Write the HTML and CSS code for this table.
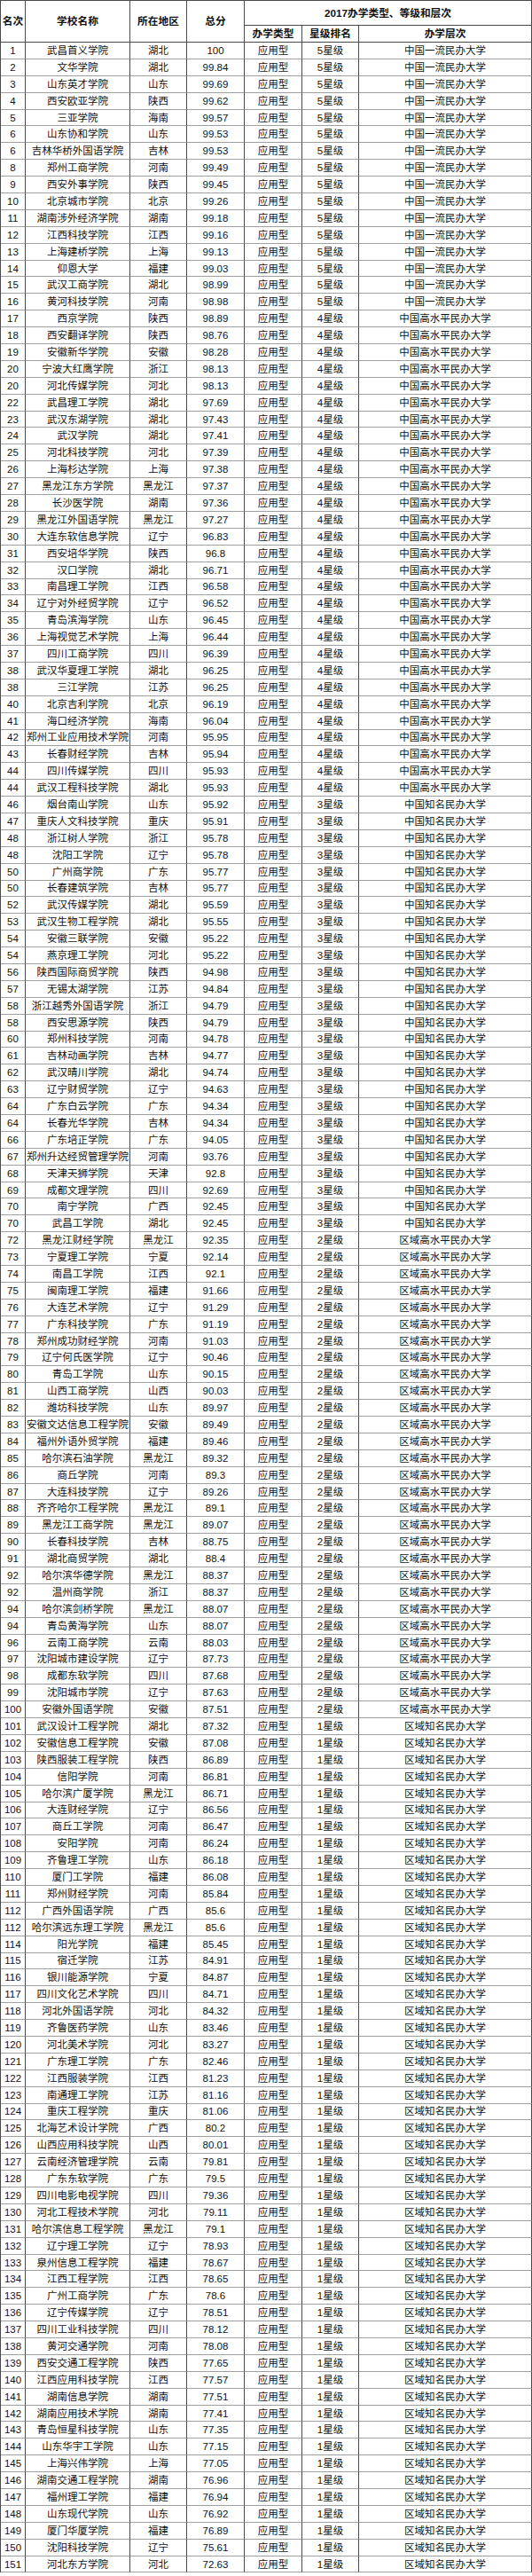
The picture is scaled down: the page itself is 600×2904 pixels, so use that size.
FILE: index.html
```html
<!DOCTYPE html>
<html lang="zh-CN">
<head>
<meta charset="utf-8">
<title>2017中国民办大学排名</title>
<link rel="stylesheet" href="styles.css">
</head>
<body>
<table class="rank">
<colgroup>
<col class="c-rank"><col class="c-name"><col class="c-area"><col class="c-score"><col class="c-type"><col class="c-star"><col class="c-level">
</colgroup>
<thead>
<tr class="h1"><th rowspan="2">名次</th><th rowspan="2">学校名称</th><th rowspan="2">所在地区</th><th rowspan="2">总分</th><th colspan="3" class="group">2017办学类型、等级和层次</th></tr>
<tr class="h2"><th>办学类型</th><th>星级排名</th><th>办学层次</th></tr>
</thead>
<tbody>
<tr><td>1</td><td>武昌首义学院</td><td>湖北</td><td>100</td><td>应用型</td><td>5星级</td><td>中国一流民办大学</td></tr>
<tr><td>2</td><td>文华学院</td><td>湖北</td><td>99.84</td><td>应用型</td><td>5星级</td><td>中国一流民办大学</td></tr>
<tr><td>3</td><td>山东英才学院</td><td>山东</td><td>99.69</td><td>应用型</td><td>5星级</td><td>中国一流民办大学</td></tr>
<tr><td>4</td><td>西安欧亚学院</td><td>陕西</td><td>99.62</td><td>应用型</td><td>5星级</td><td>中国一流民办大学</td></tr>
<tr><td>5</td><td>三亚学院</td><td>海南</td><td>99.57</td><td>应用型</td><td>5星级</td><td>中国一流民办大学</td></tr>
<tr><td>6</td><td>山东协和学院</td><td>山东</td><td>99.53</td><td>应用型</td><td>5星级</td><td>中国一流民办大学</td></tr>
<tr><td>6</td><td>吉林华桥外国语学院</td><td>吉林</td><td>99.53</td><td>应用型</td><td>5星级</td><td>中国一流民办大学</td></tr>
<tr><td>8</td><td>郑州工商学院</td><td>河南</td><td>99.49</td><td>应用型</td><td>5星级</td><td>中国一流民办大学</td></tr>
<tr><td>9</td><td>西安外事学院</td><td>陕西</td><td>99.45</td><td>应用型</td><td>5星级</td><td>中国一流民办大学</td></tr>
<tr><td>10</td><td>北京城市学院</td><td>北京</td><td>99.26</td><td>应用型</td><td>5星级</td><td>中国一流民办大学</td></tr>
<tr><td>11</td><td>湖南涉外经济学院</td><td>湖南</td><td>99.18</td><td>应用型</td><td>5星级</td><td>中国一流民办大学</td></tr>
<tr><td>12</td><td>江西科技学院</td><td>江西</td><td>99.16</td><td>应用型</td><td>5星级</td><td>中国一流民办大学</td></tr>
<tr><td>13</td><td>上海建桥学院</td><td>上海</td><td>99.13</td><td>应用型</td><td>5星级</td><td>中国一流民办大学</td></tr>
<tr><td>14</td><td>仰恩大学</td><td>福建</td><td>99.03</td><td>应用型</td><td>5星级</td><td>中国一流民办大学</td></tr>
<tr><td>15</td><td>武汉工商学院</td><td>湖北</td><td>98.99</td><td>应用型</td><td>5星级</td><td>中国一流民办大学</td></tr>
<tr><td>16</td><td>黄河科技学院</td><td>河南</td><td>98.98</td><td>应用型</td><td>5星级</td><td>中国一流民办大学</td></tr>
<tr><td>17</td><td>西京学院</td><td>陕西</td><td>98.89</td><td>应用型</td><td>4星级</td><td>中国高水平民办大学</td></tr>
<tr><td>18</td><td>西安翻译学院</td><td>陕西</td><td>98.76</td><td>应用型</td><td>4星级</td><td>中国高水平民办大学</td></tr>
<tr><td>19</td><td>安徽新华学院</td><td>安徽</td><td>98.28</td><td>应用型</td><td>4星级</td><td>中国高水平民办大学</td></tr>
<tr><td>20</td><td>宁波大红鹰学院</td><td>浙江</td><td>98.13</td><td>应用型</td><td>4星级</td><td>中国高水平民办大学</td></tr>
<tr><td>20</td><td>河北传媒学院</td><td>河北</td><td>98.13</td><td>应用型</td><td>4星级</td><td>中国高水平民办大学</td></tr>
<tr><td>22</td><td>武昌理工学院</td><td>湖北</td><td>97.69</td><td>应用型</td><td>4星级</td><td>中国高水平民办大学</td></tr>
<tr><td>23</td><td>武汉东湖学院</td><td>湖北</td><td>97.43</td><td>应用型</td><td>4星级</td><td>中国高水平民办大学</td></tr>
<tr><td>24</td><td>武汉学院</td><td>湖北</td><td>97.41</td><td>应用型</td><td>4星级</td><td>中国高水平民办大学</td></tr>
<tr><td>25</td><td>河北科技学院</td><td>河北</td><td>97.39</td><td>应用型</td><td>4星级</td><td>中国高水平民办大学</td></tr>
<tr><td>26</td><td>上海杉达学院</td><td>上海</td><td>97.38</td><td>应用型</td><td>4星级</td><td>中国高水平民办大学</td></tr>
<tr><td>27</td><td>黑龙江东方学院</td><td>黑龙江</td><td>97.37</td><td>应用型</td><td>4星级</td><td>中国高水平民办大学</td></tr>
<tr><td>28</td><td>长沙医学院</td><td>湖南</td><td>97.36</td><td>应用型</td><td>4星级</td><td>中国高水平民办大学</td></tr>
<tr><td>29</td><td>黑龙江外国语学院</td><td>黑龙江</td><td>97.27</td><td>应用型</td><td>4星级</td><td>中国高水平民办大学</td></tr>
<tr><td>30</td><td>大连东软信息学院</td><td>辽宁</td><td>96.83</td><td>应用型</td><td>4星级</td><td>中国高水平民办大学</td></tr>
<tr><td>31</td><td>西安培华学院</td><td>陕西</td><td>96.8</td><td>应用型</td><td>4星级</td><td>中国高水平民办大学</td></tr>
<tr><td>32</td><td>汉口学院</td><td>湖北</td><td>96.71</td><td>应用型</td><td>4星级</td><td>中国高水平民办大学</td></tr>
<tr><td>33</td><td>南昌理工学院</td><td>江西</td><td>96.58</td><td>应用型</td><td>4星级</td><td>中国高水平民办大学</td></tr>
<tr><td>34</td><td>辽宁对外经贸学院</td><td>辽宁</td><td>96.52</td><td>应用型</td><td>4星级</td><td>中国高水平民办大学</td></tr>
<tr><td>35</td><td>青岛滨海学院</td><td>山东</td><td>96.45</td><td>应用型</td><td>4星级</td><td>中国高水平民办大学</td></tr>
<tr><td>36</td><td>上海视觉艺术学院</td><td>上海</td><td>96.44</td><td>应用型</td><td>4星级</td><td>中国高水平民办大学</td></tr>
<tr><td>37</td><td>四川工商学院</td><td>四川</td><td>96.39</td><td>应用型</td><td>4星级</td><td>中国高水平民办大学</td></tr>
<tr><td>38</td><td>武汉华夏理工学院</td><td>湖北</td><td>96.25</td><td>应用型</td><td>4星级</td><td>中国高水平民办大学</td></tr>
<tr><td>38</td><td>三江学院</td><td>江苏</td><td>96.25</td><td>应用型</td><td>4星级</td><td>中国高水平民办大学</td></tr>
<tr><td>40</td><td>北京吉利学院</td><td>北京</td><td>96.19</td><td>应用型</td><td>4星级</td><td>中国高水平民办大学</td></tr>
<tr><td>41</td><td>海口经济学院</td><td>海南</td><td>96.04</td><td>应用型</td><td>4星级</td><td>中国高水平民办大学</td></tr>
<tr><td>42</td><td>郑州工业应用技术学院</td><td>河南</td><td>95.95</td><td>应用型</td><td>4星级</td><td>中国高水平民办大学</td></tr>
<tr><td>43</td><td>长春财经学院</td><td>吉林</td><td>95.94</td><td>应用型</td><td>4星级</td><td>中国高水平民办大学</td></tr>
<tr><td>44</td><td>四川传媒学院</td><td>四川</td><td>95.93</td><td>应用型</td><td>4星级</td><td>中国高水平民办大学</td></tr>
<tr><td>44</td><td>武汉工程科技学院</td><td>湖北</td><td>95.93</td><td>应用型</td><td>4星级</td><td>中国高水平民办大学</td></tr>
<tr><td>46</td><td>烟台南山学院</td><td>山东</td><td>95.92</td><td>应用型</td><td>3星级</td><td>中国知名民办大学</td></tr>
<tr><td>47</td><td>重庆人文科技学院</td><td>重庆</td><td>95.91</td><td>应用型</td><td>3星级</td><td>中国知名民办大学</td></tr>
<tr><td>48</td><td>浙江树人学院</td><td>浙江</td><td>95.78</td><td>应用型</td><td>3星级</td><td>中国知名民办大学</td></tr>
<tr><td>48</td><td>沈阳工学院</td><td>辽宁</td><td>95.78</td><td>应用型</td><td>3星级</td><td>中国知名民办大学</td></tr>
<tr><td>50</td><td>广州商学院</td><td>广东</td><td>95.77</td><td>应用型</td><td>3星级</td><td>中国知名民办大学</td></tr>
<tr><td>50</td><td>长春建筑学院</td><td>吉林</td><td>95.77</td><td>应用型</td><td>3星级</td><td>中国知名民办大学</td></tr>
<tr><td>52</td><td>武汉传媒学院</td><td>湖北</td><td>95.59</td><td>应用型</td><td>3星级</td><td>中国知名民办大学</td></tr>
<tr><td>53</td><td>武汉生物工程学院</td><td>湖北</td><td>95.55</td><td>应用型</td><td>3星级</td><td>中国知名民办大学</td></tr>
<tr><td>54</td><td>安徽三联学院</td><td>安徽</td><td>95.22</td><td>应用型</td><td>3星级</td><td>中国知名民办大学</td></tr>
<tr><td>54</td><td>燕京理工学院</td><td>河北</td><td>95.22</td><td>应用型</td><td>3星级</td><td>中国知名民办大学</td></tr>
<tr><td>56</td><td>陕西国际商贸学院</td><td>陕西</td><td>94.98</td><td>应用型</td><td>3星级</td><td>中国知名民办大学</td></tr>
<tr><td>57</td><td>无锡太湖学院</td><td>江苏</td><td>94.84</td><td>应用型</td><td>3星级</td><td>中国知名民办大学</td></tr>
<tr><td>58</td><td>浙江越秀外国语学院</td><td>浙江</td><td>94.79</td><td>应用型</td><td>3星级</td><td>中国知名民办大学</td></tr>
<tr><td>58</td><td>西安思源学院</td><td>陕西</td><td>94.79</td><td>应用型</td><td>3星级</td><td>中国知名民办大学</td></tr>
<tr><td>60</td><td>郑州科技学院</td><td>河南</td><td>94.78</td><td>应用型</td><td>3星级</td><td>中国知名民办大学</td></tr>
<tr><td>61</td><td>吉林动画学院</td><td>吉林</td><td>94.77</td><td>应用型</td><td>3星级</td><td>中国知名民办大学</td></tr>
<tr><td>62</td><td>武汉晴川学院</td><td>湖北</td><td>94.74</td><td>应用型</td><td>3星级</td><td>中国知名民办大学</td></tr>
<tr><td>63</td><td>辽宁财贸学院</td><td>辽宁</td><td>94.63</td><td>应用型</td><td>3星级</td><td>中国知名民办大学</td></tr>
<tr><td>64</td><td>广东白云学院</td><td>广东</td><td>94.34</td><td>应用型</td><td>3星级</td><td>中国知名民办大学</td></tr>
<tr><td>64</td><td>长春光华学院</td><td>吉林</td><td>94.34</td><td>应用型</td><td>3星级</td><td>中国知名民办大学</td></tr>
<tr><td>66</td><td>广东培正学院</td><td>广东</td><td>94.05</td><td>应用型</td><td>3星级</td><td>中国知名民办大学</td></tr>
<tr><td>67</td><td>郑州升达经贸管理学院</td><td>河南</td><td>93.76</td><td>应用型</td><td>3星级</td><td>中国知名民办大学</td></tr>
<tr><td>68</td><td>天津天狮学院</td><td>天津</td><td>92.8</td><td>应用型</td><td>3星级</td><td>中国知名民办大学</td></tr>
<tr><td>69</td><td>成都文理学院</td><td>四川</td><td>92.69</td><td>应用型</td><td>3星级</td><td>中国知名民办大学</td></tr>
<tr><td>70</td><td>南宁学院</td><td>广西</td><td>92.45</td><td>应用型</td><td>3星级</td><td>中国知名民办大学</td></tr>
<tr><td>70</td><td>武昌工学院</td><td>湖北</td><td>92.45</td><td>应用型</td><td>3星级</td><td>中国知名民办大学</td></tr>
<tr><td>72</td><td>黑龙江财经学院</td><td>黑龙江</td><td>92.35</td><td>应用型</td><td>2星级</td><td>区域高水平民办大学</td></tr>
<tr><td>73</td><td>宁夏理工学院</td><td>宁夏</td><td>92.14</td><td>应用型</td><td>2星级</td><td>区域高水平民办大学</td></tr>
<tr><td>74</td><td>南昌工学院</td><td>江西</td><td>92.1</td><td>应用型</td><td>2星级</td><td>区域高水平民办大学</td></tr>
<tr><td>75</td><td>闽南理工学院</td><td>福建</td><td>91.66</td><td>应用型</td><td>2星级</td><td>区域高水平民办大学</td></tr>
<tr><td>76</td><td>大连艺术学院</td><td>辽宁</td><td>91.29</td><td>应用型</td><td>2星级</td><td>区域高水平民办大学</td></tr>
<tr><td>77</td><td>广东科技学院</td><td>广东</td><td>91.19</td><td>应用型</td><td>2星级</td><td>区域高水平民办大学</td></tr>
<tr><td>78</td><td>郑州成功财经学院</td><td>河南</td><td>91.03</td><td>应用型</td><td>2星级</td><td>区域高水平民办大学</td></tr>
<tr><td>79</td><td>辽宁何氏医学院</td><td>辽宁</td><td>90.46</td><td>应用型</td><td>2星级</td><td>区域高水平民办大学</td></tr>
<tr><td>80</td><td>青岛工学院</td><td>山东</td><td>90.15</td><td>应用型</td><td>2星级</td><td>区域高水平民办大学</td></tr>
<tr><td>81</td><td>山西工商学院</td><td>山西</td><td>90.03</td><td>应用型</td><td>2星级</td><td>区域高水平民办大学</td></tr>
<tr><td>82</td><td>潍坊科技学院</td><td>山东</td><td>89.97</td><td>应用型</td><td>2星级</td><td>区域高水平民办大学</td></tr>
<tr><td>83</td><td>安徽文达信息工程学院</td><td>安徽</td><td>89.49</td><td>应用型</td><td>2星级</td><td>区域高水平民办大学</td></tr>
<tr><td>84</td><td>福州外语外贸学院</td><td>福建</td><td>89.46</td><td>应用型</td><td>2星级</td><td>区域高水平民办大学</td></tr>
<tr><td>85</td><td>哈尔滨石油学院</td><td>黑龙江</td><td>89.32</td><td>应用型</td><td>2星级</td><td>区域高水平民办大学</td></tr>
<tr><td>86</td><td>商丘学院</td><td>河南</td><td>89.3</td><td>应用型</td><td>2星级</td><td>区域高水平民办大学</td></tr>
<tr><td>87</td><td>大连科技学院</td><td>辽宁</td><td>89.26</td><td>应用型</td><td>2星级</td><td>区域高水平民办大学</td></tr>
<tr><td>88</td><td>齐齐哈尔工程学院</td><td>黑龙江</td><td>89.1</td><td>应用型</td><td>2星级</td><td>区域高水平民办大学</td></tr>
<tr><td>89</td><td>黑龙江工商学院</td><td>黑龙江</td><td>89.07</td><td>应用型</td><td>2星级</td><td>区域高水平民办大学</td></tr>
<tr><td>90</td><td>长春科技学院</td><td>吉林</td><td>88.75</td><td>应用型</td><td>2星级</td><td>区域高水平民办大学</td></tr>
<tr><td>91</td><td>湖北商贸学院</td><td>湖北</td><td>88.4</td><td>应用型</td><td>2星级</td><td>区域高水平民办大学</td></tr>
<tr><td>92</td><td>哈尔滨华德学院</td><td>黑龙江</td><td>88.37</td><td>应用型</td><td>2星级</td><td>区域高水平民办大学</td></tr>
<tr><td>92</td><td>温州商学院</td><td>浙江</td><td>88.37</td><td>应用型</td><td>2星级</td><td>区域高水平民办大学</td></tr>
<tr><td>94</td><td>哈尔滨剑桥学院</td><td>黑龙江</td><td>88.07</td><td>应用型</td><td>2星级</td><td>区域高水平民办大学</td></tr>
<tr><td>94</td><td>青岛黄海学院</td><td>山东</td><td>88.07</td><td>应用型</td><td>2星级</td><td>区域高水平民办大学</td></tr>
<tr><td>96</td><td>云南工商学院</td><td>云南</td><td>88.03</td><td>应用型</td><td>2星级</td><td>区域高水平民办大学</td></tr>
<tr><td>97</td><td>沈阳城市建设学院</td><td>辽宁</td><td>87.73</td><td>应用型</td><td>2星级</td><td>区域高水平民办大学</td></tr>
<tr><td>98</td><td>成都东软学院</td><td>四川</td><td>87.68</td><td>应用型</td><td>2星级</td><td>区域高水平民办大学</td></tr>
<tr><td>99</td><td>沈阳城市学院</td><td>辽宁</td><td>87.63</td><td>应用型</td><td>2星级</td><td>区域高水平民办大学</td></tr>
<tr><td>100</td><td>安徽外国语学院</td><td>安徽</td><td>87.51</td><td>应用型</td><td>2星级</td><td>区域高水平民办大学</td></tr>
<tr><td>101</td><td>武汉设计工程学院</td><td>湖北</td><td>87.32</td><td>应用型</td><td>1星级</td><td>区域知名民办大学</td></tr>
<tr><td>102</td><td>安徽信息工程学院</td><td>安徽</td><td>87.08</td><td>应用型</td><td>1星级</td><td>区域知名民办大学</td></tr>
<tr><td>103</td><td>陕西服装工程学院</td><td>陕西</td><td>86.89</td><td>应用型</td><td>1星级</td><td>区域知名民办大学</td></tr>
<tr><td>104</td><td>信阳学院</td><td>河南</td><td>86.81</td><td>应用型</td><td>1星级</td><td>区域知名民办大学</td></tr>
<tr><td>105</td><td>哈尔滨广厦学院</td><td>黑龙江</td><td>86.71</td><td>应用型</td><td>1星级</td><td>区域知名民办大学</td></tr>
<tr><td>106</td><td>大连财经学院</td><td>辽宁</td><td>86.56</td><td>应用型</td><td>1星级</td><td>区域知名民办大学</td></tr>
<tr><td>107</td><td>商丘工学院</td><td>河南</td><td>86.47</td><td>应用型</td><td>1星级</td><td>区域知名民办大学</td></tr>
<tr><td>108</td><td>安阳学院</td><td>河南</td><td>86.24</td><td>应用型</td><td>1星级</td><td>区域知名民办大学</td></tr>
<tr><td>109</td><td>齐鲁理工学院</td><td>山东</td><td>86.18</td><td>应用型</td><td>1星级</td><td>区域知名民办大学</td></tr>
<tr><td>110</td><td>厦门工学院</td><td>福建</td><td>86.08</td><td>应用型</td><td>1星级</td><td>区域知名民办大学</td></tr>
<tr><td>111</td><td>郑州财经学院</td><td>河南</td><td>85.84</td><td>应用型</td><td>1星级</td><td>区域知名民办大学</td></tr>
<tr><td>112</td><td>广西外国语学院</td><td>广西</td><td>85.6</td><td>应用型</td><td>1星级</td><td>区域知名民办大学</td></tr>
<tr><td>112</td><td>哈尔滨远东理工学院</td><td>黑龙江</td><td>85.6</td><td>应用型</td><td>1星级</td><td>区域知名民办大学</td></tr>
<tr><td>114</td><td>阳光学院</td><td>福建</td><td>85.45</td><td>应用型</td><td>1星级</td><td>区域知名民办大学</td></tr>
<tr><td>115</td><td>宿迁学院</td><td>江苏</td><td>84.91</td><td>应用型</td><td>1星级</td><td>区域知名民办大学</td></tr>
<tr><td>116</td><td>银川能源学院</td><td>宁夏</td><td>84.87</td><td>应用型</td><td>1星级</td><td>区域知名民办大学</td></tr>
<tr><td>117</td><td>四川文化艺术学院</td><td>四川</td><td>84.71</td><td>应用型</td><td>1星级</td><td>区域知名民办大学</td></tr>
<tr><td>118</td><td>河北外国语学院</td><td>河北</td><td>84.32</td><td>应用型</td><td>1星级</td><td>区域知名民办大学</td></tr>
<tr><td>119</td><td>齐鲁医药学院</td><td>山东</td><td>83.46</td><td>应用型</td><td>1星级</td><td>区域知名民办大学</td></tr>
<tr><td>120</td><td>河北美术学院</td><td>河北</td><td>83.27</td><td>应用型</td><td>1星级</td><td>区域知名民办大学</td></tr>
<tr><td>121</td><td>广东理工学院</td><td>广东</td><td>82.46</td><td>应用型</td><td>1星级</td><td>区域知名民办大学</td></tr>
<tr><td>122</td><td>江西服装学院</td><td>江西</td><td>81.23</td><td>应用型</td><td>1星级</td><td>区域知名民办大学</td></tr>
<tr><td>123</td><td>南通理工学院</td><td>江苏</td><td>81.16</td><td>应用型</td><td>1星级</td><td>区域知名民办大学</td></tr>
<tr><td>124</td><td>重庆工程学院</td><td>重庆</td><td>81.06</td><td>应用型</td><td>1星级</td><td>区域知名民办大学</td></tr>
<tr><td>125</td><td>北海艺术设计学院</td><td>广西</td><td>80.2</td><td>应用型</td><td>1星级</td><td>区域知名民办大学</td></tr>
<tr><td>126</td><td>山西应用科技学院</td><td>山西</td><td>80.01</td><td>应用型</td><td>1星级</td><td>区域知名民办大学</td></tr>
<tr><td>127</td><td>云南经济管理学院</td><td>云南</td><td>79.81</td><td>应用型</td><td>1星级</td><td>区域知名民办大学</td></tr>
<tr><td>128</td><td>广东东软学院</td><td>广东</td><td>79.5</td><td>应用型</td><td>1星级</td><td>区域知名民办大学</td></tr>
<tr><td>129</td><td>四川电影电视学院</td><td>四川</td><td>79.36</td><td>应用型</td><td>1星级</td><td>区域知名民办大学</td></tr>
<tr><td>130</td><td>河北工程技术学院</td><td>河北</td><td>79.11</td><td>应用型</td><td>1星级</td><td>区域知名民办大学</td></tr>
<tr><td>131</td><td>哈尔滨信息工程学院</td><td>黑龙江</td><td>79.1</td><td>应用型</td><td>1星级</td><td>区域知名民办大学</td></tr>
<tr><td>132</td><td>辽宁理工学院</td><td>辽宁</td><td>78.93</td><td>应用型</td><td>1星级</td><td>区域知名民办大学</td></tr>
<tr><td>133</td><td>泉州信息工程学院</td><td>福建</td><td>78.67</td><td>应用型</td><td>1星级</td><td>区域知名民办大学</td></tr>
<tr><td>134</td><td>江西工程学院</td><td>江西</td><td>78.65</td><td>应用型</td><td>1星级</td><td>区域知名民办大学</td></tr>
<tr><td>135</td><td>广州工商学院</td><td>广东</td><td>78.6</td><td>应用型</td><td>1星级</td><td>区域知名民办大学</td></tr>
<tr><td>136</td><td>辽宁传媒学院</td><td>辽宁</td><td>78.51</td><td>应用型</td><td>1星级</td><td>区域知名民办大学</td></tr>
<tr><td>137</td><td>四川工业科技学院</td><td>四川</td><td>78.12</td><td>应用型</td><td>1星级</td><td>区域知名民办大学</td></tr>
<tr><td>138</td><td>黄河交通学院</td><td>河南</td><td>78.08</td><td>应用型</td><td>1星级</td><td>区域知名民办大学</td></tr>
<tr><td>139</td><td>西安交通工程学院</td><td>陕西</td><td>77.65</td><td>应用型</td><td>1星级</td><td>区域知名民办大学</td></tr>
<tr><td>140</td><td>江西应用科技学院</td><td>江西</td><td>77.57</td><td>应用型</td><td>1星级</td><td>区域知名民办大学</td></tr>
<tr><td>141</td><td>湖南信息学院</td><td>湖南</td><td>77.51</td><td>应用型</td><td>1星级</td><td>区域知名民办大学</td></tr>
<tr><td>142</td><td>湖南应用技术学院</td><td>湖南</td><td>77.41</td><td>应用型</td><td>1星级</td><td>区域知名民办大学</td></tr>
<tr><td>143</td><td>青岛恒星科技学院</td><td>山东</td><td>77.35</td><td>应用型</td><td>1星级</td><td>区域知名民办大学</td></tr>
<tr><td>144</td><td>山东华宇工学院</td><td>山东</td><td>77.15</td><td>应用型</td><td>1星级</td><td>区域知名民办大学</td></tr>
<tr><td>145</td><td>上海兴伟学院</td><td>上海</td><td>77.05</td><td>应用型</td><td>1星级</td><td>区域知名民办大学</td></tr>
<tr><td>146</td><td>湖南交通工程学院</td><td>湖南</td><td>76.96</td><td>应用型</td><td>1星级</td><td>区域知名民办大学</td></tr>
<tr><td>147</td><td>福州理工学院</td><td>福建</td><td>76.94</td><td>应用型</td><td>1星级</td><td>区域知名民办大学</td></tr>
<tr><td>148</td><td>山东现代学院</td><td>山东</td><td>76.92</td><td>应用型</td><td>1星级</td><td>区域知名民办大学</td></tr>
<tr><td>149</td><td>厦门华厦学院</td><td>福建</td><td>76.89</td><td>应用型</td><td>1星级</td><td>区域知名民办大学</td></tr>
<tr><td>150</td><td>沈阳科技学院</td><td>辽宁</td><td>75.61</td><td>应用型</td><td>1星级</td><td>区域知名民办大学</td></tr>
<tr><td>151</td><td>河北东方学院</td><td>河北</td><td>72.63</td><td>应用型</td><td>1星级</td><td>区域知名民办大学</td></tr>
</tbody>
</table>
</body>
</html>
```

FILE: styles.css
```css
html, body {
  margin: 0;
  padding: 0;
  background: #ffffff;
}

body {
  font-family: "Liberation Sans", "Noto Sans CJK SC", sans-serif;
  color: #111111;
}

.rank {
  width: 600px;
  table-layout: fixed;
  border-collapse: separate;
  border-spacing: 0;
  border-top: 1px solid #4a4a4a;
  border-left: 1px solid #4a4a4a;
}

.c-rank { width: 28px; }
.c-name { width: 118px; }
.c-area { width: 64px; }
.c-score { width: 65px; }
.c-type { width: 65px; }
.c-star { width: 64px; }
.c-level { width: 195px; }

.rank th,
.rank td {
  padding: 0;
  text-align: center;
  vertical-align: middle;
  white-space: nowrap;
  overflow: hidden;
  border-right: 1px solid #4a4a4a;
  border-bottom: 1px solid #a0a0a0;
  font-size: 11.5px;
  line-height: 14px;
}

.rank th {
  font-weight: bold;
  font-size: 11.7px;
  border-bottom-color: #4a4a4a;
}

.rank .h1 { height: 28px; }
.rank .h2 { height: 19px; }

.rank tbody tr { height: 18.9px; }
```
